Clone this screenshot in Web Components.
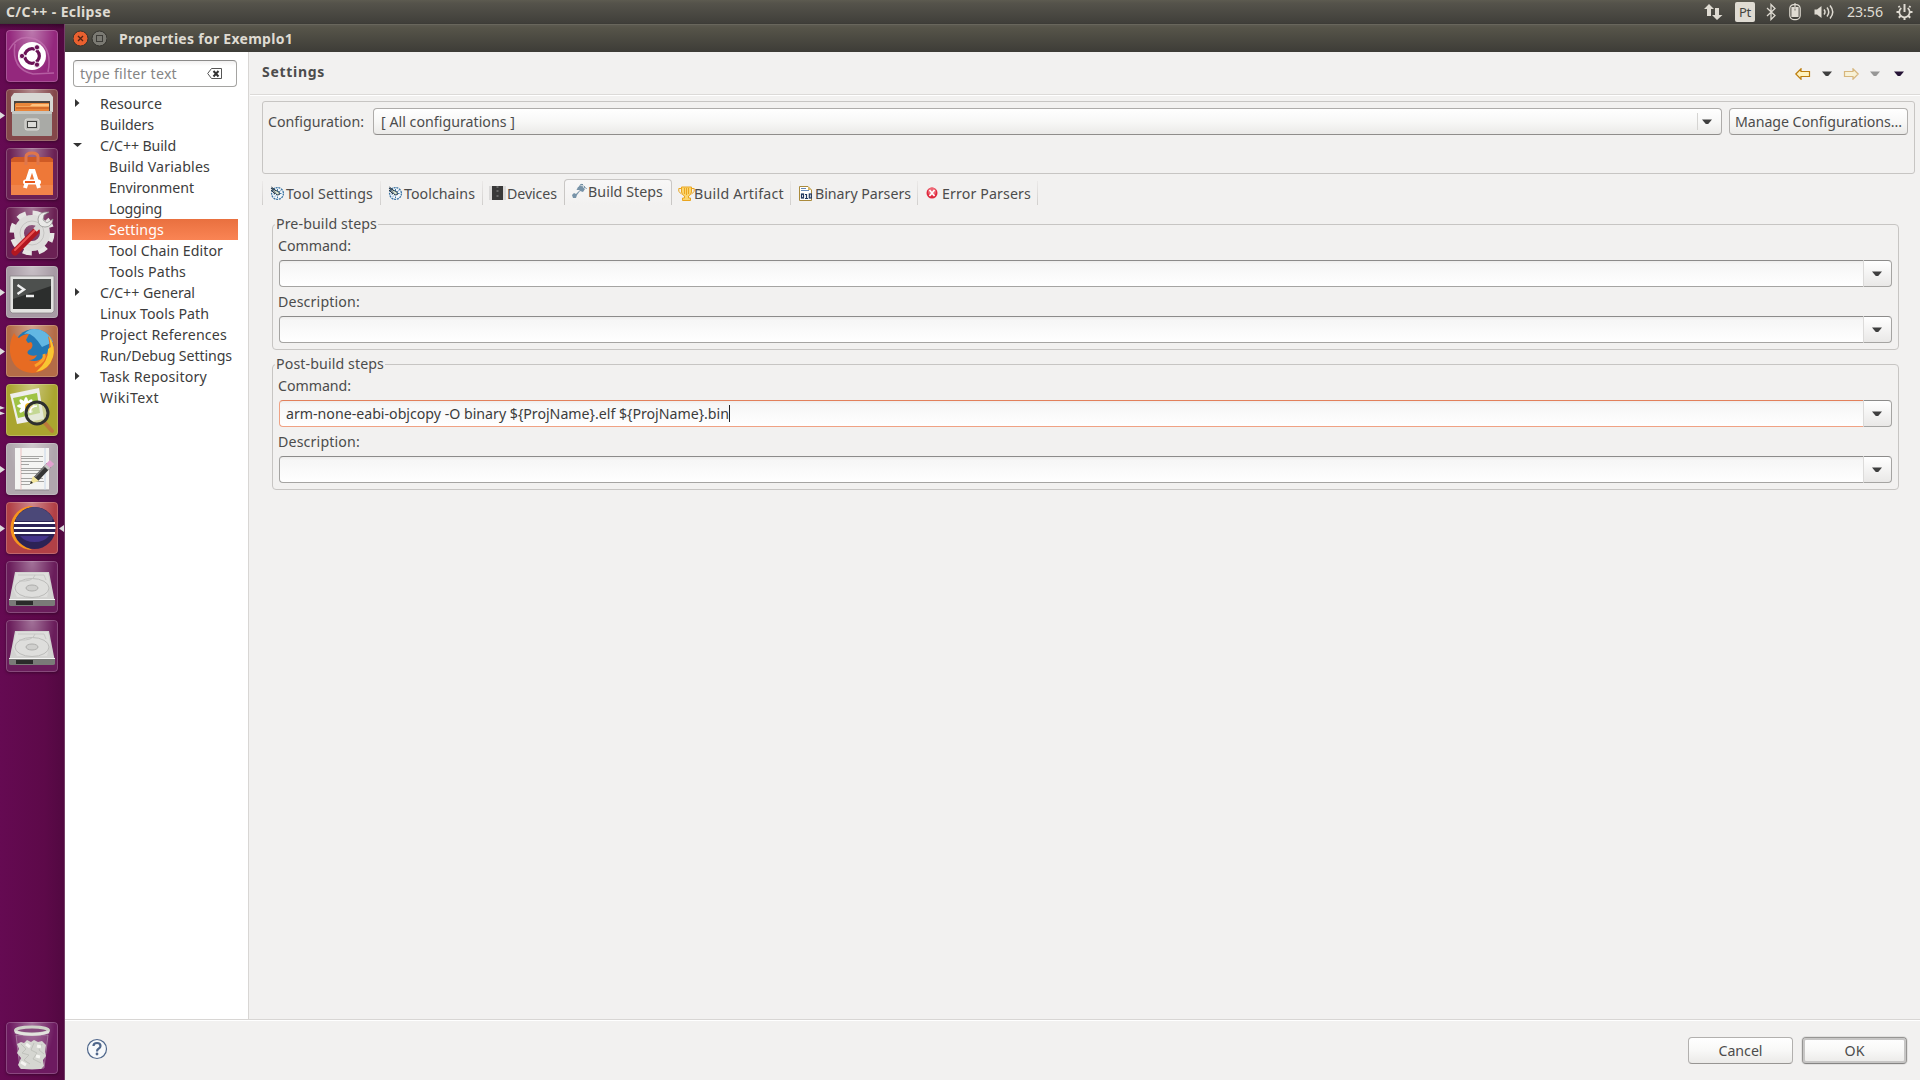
<!DOCTYPE html>
<html lang="en">
<head>
<meta charset="utf-8">
<title>Properties for Exemplo1</title>
<style>
  body {
    margin: 0;
    width: 1920px;
    height: 1080px;
    overflow: hidden;
    background: #f2f1f0;
    color: #4c4c4c;
    font: 14.2px/20px "Noto Sans", "Open Sans", sans-serif;
    display: flex;
    flex-direction: column;
  }
  .desktop { display: flex; height: 1056px; }
</style>
</head>
<body>
<top-panel></top-panel>
<div class="desktop">
  <app-launcher></app-launcher>
  <properties-dialog></properties-dialog>
</div>

<script>
function define(name, html, setup) {
  const template = document.createElement('template');
  template.innerHTML = html;
  customElements.define(name, class extends HTMLElement {
    connectedCallback() {
      if (this.shadowRoot) return;
      this.attachShadow({ mode: 'open' });
      this.shadowRoot.appendChild(template.content.cloneNode(true));
      if (setup) setup(this, this.shadowRoot);
    }
  });
}

/* <fit-text w="95">: one line of text, tracked to a given width */
define('fit-text', `
  <style>
    :host { display: block; flex: none; white-space: nowrap; }
    span { display: inline-block; vertical-align: top; }
  </style>
  <span><slot></slot></span>
`, (host, root) => {
  const w = Number(host.getAttribute('w'));
  host.style.width = w + 'px';
  queueMicrotask(() => {
    const natural = root.querySelector('span').getBoundingClientRect().width;
    if (!natural) return;
    host.style.letterSpacing = (w - natural) / host.textContent.length + 'px';
  });
});

/* small downward triangle used by every drop-down */
define('caret-down', `
  <style>
    :host { display: block; flex: none; width: 10px; height: 6px; color: #3f3f3f; }
    svg { display: block; }
  </style>
  <svg width="10" height="6"><path d="M0 .5H10L6.2 5H3.8Z" fill="currentColor"/></svg>
`);

/* ---------- top panel ---------- */
define('top-panel', `
  <style>
    :host {
      display: flex; align-items: center; box-sizing: border-box;
      height: 24px; padding: 0 7px 0 6px;
      background: linear-gradient(#5d5b50 0, #55534b 3px, #403f3a 23px, #3a3934 24px);
      color: #dfdbd2;
    }
    .title { font-weight: 700; font-size: 14px; margin-right: auto; padding-bottom: 1px; }
    svg { display: block; flex: none; }
    .lang {
      width: 20px; height: 20px; margin: 0 11px 0 12px; border-radius: 2px;
      background: #dfdbd2; color: #45443f; font-size: 13px; line-height: 20px;
      display: flex; justify-content: center;
    }
    .clock { margin: 0 13px 0 12px; padding-bottom: 1px; }
  </style>
  <fit-text class="title" w="105">C/C++ - Eclipse</fit-text>
  <svg width="19" height="18" fill="#dfdbd2"><path d="M5 1 10 6H7V13H3V6H0ZM13 17 8 12H11V5H15V12H18.500Z"/></svg>
  <div class="lang"><fit-text w="12">Pt</fit-text></div>
  <svg width="10" height="18" fill="none" stroke="#dfdbd2" stroke-width="1.300"><path d="M1 5 9 12.500 5 16.500V1.500L9 5.500 1 13"/></svg>
  <svg style="margin-left:13px" width="12" height="18" fill="none" stroke="#dfdbd2" stroke-width="1.200"><rect x=".8" y="1.600" width="10.400" height="15" rx="4"/><path d="M3 4.500H5V8H7V4.500H9V13.500H3Z" fill="#dfdbd2"/><path d="M6 0V6"/></svg>
  <svg style="margin-left:13px" width="21" height="18" fill="none" stroke="#dfdbd2" stroke-width="1.500"><path d="M.5 6.500H3L7.500 3V15L3 11.500H.5Z" fill="#dfdbd2" stroke="none"/><path d="M10 6.500Q12 9 10 11.500M13 4.500Q16.500 9 13 13.500M16 2.500Q21.500 9 16 15.500"/></svg>
  <fit-text class="clock" w="36">23:56</fit-text>
  <svg width="17" height="18" fill="none" stroke="#dfdbd2"><path d="M5.300 5A5.200 5.200 0 1 0 11.700 5" stroke-width="1.700"/><path d="M8.500 1V9" stroke-width="2"/><path d="M3.700 4.300 2.500 3.100M13.300 4.300 14.500 3.100M3.300 9H.5M13.700 9H16.500M4.700 12.800 2.800 14.700M12.300 12.800 14.200 14.700M8.500 14V17" stroke-width="2"/></svg>
`);

/* ---------- launcher ---------- */
const discIcon = `
  <path d="M9 11H43L48.500 39H3.500Z" fill="#d3d3d1"/>
  <path d="M10 12H42L44 24 41 36H11L7 28Z" fill="#dededc"/>
  <path d="M3 39H49V43.500Q49 45 47 45H5Q3 45 3 43.500Z" fill="#7a7b78"/><path d="M10 40H27V44H10Z" fill="#2a2b2a"/>
  <path d="M3 38.500H49" stroke="#f6f6f5"/>
  <ellipse cx="26" cy="27" rx="17" ry="9.500" fill="none" stroke="#bcbcba"/>
  <path d="M12 14H38L40 19" fill="none" stroke="#c8c8c6"/>
  <path d="M13 20Q27 21 29 14" fill="none" stroke="#c4c4c2"/>
  <ellipse cx="26" cy="27" rx="6" ry="3" fill="#cfcfcd" stroke="#adadab"/>`;

const launcherItems = [
  { bg: '#94287d', art: `
    <g fill="none" stroke="#c77ab6" stroke-width="1.500" opacity=".65"><path d="M3 20Q12 3 29 9Q47 17 42 42"/><path d="M9 14Q5 39 27 44L48 43"/></g>
    <circle cx="26" cy="26" r="14" fill="#fff"/>
    <circle cx="26" cy="26" r="7.300" fill="none" stroke="#6a1256" stroke-width="3.300"/>
    <g stroke="#fff" stroke-width="1.300"><path d="M26 26H13M26 26 32 15.500M26 26 32 36.500"/></g><circle cx="26" cy="26" r="5.300" fill="#fff"/>
    <g fill="#6a1256" stroke="#fff" stroke-width=".8"><circle cx="16" cy="26" r="2.600"/><circle cx="31" cy="17.300" r="2.600"/><circle cx="31" cy="34.700" r="2.600"/></g>` },
  { bg: '#84474a', left: 1, art: `
    <path d="M8 4H44L47 8V23H5V8Z" fill="#d8d8d4"/><path d="M8 12H44V22H8Z" fill="#4a4540"/>
    <path d="M10 14H43V22H9V15Z" fill="#e9863a"/><path d="M10 17H24L26 15H43V17.500H10Z" fill="#ffc37e"/><path d="M10 19H43" stroke="#c1571d"/>
    <path d="M6 22H46V46Q46 47 45 47H7Q6 47 6 46Z" fill="#a9aaa6"/><path d="M6 22H46V25H6Z" fill="#c5c6c2"/>
    <rect x="19" y="30" width="14" height="11" rx="2" fill="#bdbdb9" stroke="#deded9"/><rect x="21.500" y="32.500" width="9" height="6" fill="#dcdcd8" stroke="#3f403d"/>` },
  { bg: '#6b2154', art: `
    <path d="M5 11 8 9H44L47 11V15H5Z" fill="#cf5a25"/><path d="M5 14H47V47H5Z" fill="#ee7838"/><path d="M5 37H47V47H5Z" fill="#f1844a"/>
    <path d="M20 17V9Q20 5 26 5T32 9V17" fill="none" stroke="#df764b" stroke-width="3"/>
    <path d="M19 40 24.500 23H27.500L33 40" fill="none" stroke="#fff" stroke-width="4"/><rect x="17" y="31.500" width="18" height="5" rx="2.500" fill="#fff"/><path d="M19 34H29" stroke="#e8581c" stroke-width="2"/>` },
  { bg: '#6b2154', art: `
    <circle cx="26" cy="26" r="19" fill="none" stroke="#e6e5e3" stroke-width="7" stroke-dasharray="8.500 6.420"/>
    <circle cx="26" cy="26" r="13" fill="none" stroke="#dedddb" stroke-width="10"/><circle cx="26" cy="26" r="12" fill="none" stroke="#c6c5c3"/>
    <path d="M9 45 30 24" stroke="#b21720" stroke-width="7" stroke-linecap="round"/><path d="M9 43 29 23" stroke="#ec5453" stroke-width="2" stroke-linecap="round"/>
    <path d="M29 23 35 17" stroke="#d6d6d4" stroke-width="5"/><path d="M43 5Q33 4 32 12Q32 20 39 20Q46 20 47 12L41 16 37 13 38 8Z" fill="#e9e9e7" stroke="#8e8e8c" stroke-width=".7"/>` },
  { bg: '#a79aa4', left: 1, art: `
    <path d="M4 10H48V45L46 47H6L4 45Z" fill="#e2e2e0" stroke="#8b8589" stroke-width=".8"/><rect x="7" y="13" width="38" height="30" fill="#2c2e2d"/><path d="M7 13H45V20L7 33Z" fill="#4d504e"/>
    <path d="M11.500 19 18 23.500 11.500 28M20 30H28" fill="none" stroke="#eee" stroke-width="2.400"/>` },
  { bg: '#b46c47', left: 1, art: `
    <circle cx="28" cy="24" r="20" fill="#2378b5"/><path d="M28 4A20 20 0 0 1 47 17L36 22Q26 6 18 9Q23 4 28 4Z" fill="#62b7e3"/>
    <path d="M8 8Q3 17 4 27Q6 46 26 48Q45 47 48 28Q49 17 42 11Q46 25 38 32Q31 38 23 35Q29 35 31 30Q26 32 22 29Q20 26 25 24Q28 20 25 17L22 18 20 15 23 9Q17 9 13 13Q9 11 8 8Z" fill="#e76b22"/>
    <path d="M43 11Q50 22 47 32Q43 45 30 47Q43 36 42 24L45 22Z" fill="#f8c632"/><path d="M38 29Q40 35 29 41" fill="none" stroke="#f9a22a" stroke-width="3"/>` },
  { bg: '#aaa52f', left: 2, art: `
    <path d="M4 10 33 4 38 35 11 40Z" fill="#eeeeec"/><path d="M7 14 31 9 34 29 12 34Z" fill="#9fc345"/>
    <g fill="#fff"><ellipse cx="20" cy="22" rx="9" ry="2.600"/><ellipse cx="20" cy="22" rx="2.600" ry="9"/><ellipse cx="20" cy="22" rx="9" ry="2.600" transform="rotate(45 20 22)"/><ellipse cx="20" cy="22" rx="9" ry="2.600" transform="rotate(-45 20 22)"/></g><circle cx="23" cy="23" r="4" fill="#f0b521"/>
    <path d="M39 39 46 47" stroke="#bb7a3b" stroke-width="4" stroke-linecap="round"/>
    <circle cx="31" cy="29" r="11" fill="#dde6ca" fill-opacity=".6" stroke="#2e302e" stroke-width="3"/><path d="M24 29Q24 22 31 22" fill="none" stroke="#fff" stroke-width="1.500"/>` },
  { bg: '#b0a7ad', left: 1, art: `
    <path d="M9 5H43V47H9Z" fill="#f4f4f2"/><path d="M9 47H43" stroke="#8f898d"/><path d="M15 5V47" stroke="#e9b4b4" stroke-width=".8"/><path d="M39 5V47" stroke="#bcd0e8" stroke-width=".8"/>
    <path d="M15 13.500H37M15 15.500H33M15 18.500H37M15 21.500H23M15 25.500H37M15 27.500H34M15 30.500H36M15 35.500H37M15 38.500H38M15 41.500H24" stroke="#a5a5a3"/>
    <path d="M30 36 43 22" stroke="#353635" stroke-width="6"/><path d="M29 34 41 21" stroke="#777" stroke-width="1.500"/><path d="M40.500 24.500 46 19" stroke="#e2a0cf" stroke-width="6"/><path d="M40 25 42 23" stroke="#c7c7c5" stroke-width="6"/><path d="M24 41 27 33 33 38Z" fill="#f1e49a"/><path d="M24 41 25 38 27 40Z" fill="#222"/>` },
  { bg: '#b14046', left: 1, right: 1, art: `
    <path d="M27 4A22 22 0 0 0 26 48A25 25 0 0 1 27 4Z" fill="#f7941e"/><path d="M26 4.500A22 22 0 0 0 24 47.500L16 41 13 22Z" fill="#f7941e"/>
    <circle cx="28.500" cy="26" r="21" fill="#2c2255"/><path d="M10 16Q18 5 28.500 5T47 16L46 19H10Z" fill="#4b4878"/><path d="M14 34H43Q38 40 28.500 40T14 34Z" fill="#43338a"/>
    <path d="M8 21H49M8 26H49.500M8 31H49" stroke="#fff" stroke-width="2"/>` },
  { bg: '#6a1d5b', art: discIcon },
  { bg: '#6a1d5b', art: discIcon },
  { bg: '#6d1a60', last: 1, art: `
    <path d="M10 13H42L38 46Q26 49 14 46Z" fill="#fff" fill-opacity=".1" stroke="#b191ac" stroke-width=".7"/>
    <path d="M11 22 15 20 18 21 21 18 25 20 28 18 32 20 36 19 40 23 39 30 40 34 37 38 38 44 35 47H15L12 43 15 36 11 31 13 27Z" fill="#d5d6d1"/>
    <path d="M15 22 20 27 16 31 23 33 18 38 24 42M28 21 25 28 31 31 27 37 35 41M36 22 33 28 38 32" fill="none" stroke="#c0c2bc"/><path d="M20 22 24 25M31 24 35 25M15 40 20 43M30 34 34 35" stroke="#f5f5f2" stroke-width="3"/>
    <ellipse cx="26" cy="8.500" rx="16.500" ry="3.500" fill="#864a7d" stroke="#cfd1c9" stroke-width="3"/><path d="M9 10Q26 15 43 10" fill="none" stroke="#e3e4df" stroke-width="2.500"/>` },
];

define('launcher-tile', `
  <style>
    :host { display: flex; align-items: center; width: 64px; height: 52px; flex: none; }
    .mark { width: 6px; height: 9px; flex: none; display: block; }
    .tile {
      width: 52px; height: 52px; flex: none; border-radius: 4px; overflow: hidden;
      background: radial-gradient(ellipse at 50% 0, rgba(255,255,255,.38), rgba(255,255,255,0) 62%), var(--tile);
      box-shadow: inset 0 0 0 1px rgba(255,255,255,.2), 0 1px 3px rgba(0,0,0,.35);
    }
    .tile svg { display: block; }
  </style>
  <svg class="mark" id="left"></svg>
  <div class="tile"></div>
  <svg class="mark" id="right"></svg>
`);

define('app-launcher', `
  <style>
    :host {
      display: flex; flex-direction: column; gap: 7px; box-sizing: border-box;
      width: 65px; padding: 6px 0 6px; flex: none; border-right: 1px solid #743e68;
      background: linear-gradient(rgba(0,0,0,.35), transparent 6px), linear-gradient(90deg, #650a52, #5d0949 70%, #520841);
    }
    .last { margin-top: auto; }
  </style>
`, (host, root) => {
  for (const item of launcherItems) {
    const tile = document.createElement('launcher-tile');
    tile.style.setProperty('--tile', item.bg);
    if (item.last) tile.className = 'last';
    root.appendChild(tile);
    const part = tile.shadowRoot;
    part.querySelector('.tile').innerHTML = `<svg width="52" height="52" viewBox="0 0 52 52">${item.art}</svg>`;
    if (item.left === 1) part.getElementById('left').innerHTML = '<path d="M0 1 5 4.500 0 8Z" fill="#ddd"/>';
    if (item.left === 2) part.getElementById('left').innerHTML = '<path d="M0 0 5 2 0 3.500ZM0 5.500 5 7.500 0 9Z" fill="#ddd"/>';
    if (item.right) part.getElementById('right').innerHTML = '<path d="M6 1 1 4.500 6 8Z" fill="#ddd"/>';
  }
});

/* ---------- widgets ---------- */
define('push-button', `
  <style>
    :host {
      display: flex; align-items: center; justify-content: center; box-sizing: border-box; flex: none;
      height: 27px; border: 1px solid #b2b0ae; border-bottom-color: #979593; border-radius: 4px;
      background: linear-gradient(#fff, #f8f8f7 50%, #ebeae8);
    }
    :host([default]) {
      border-color: #969593; border-bottom-color: #858483;
      box-shadow: inset 0 0 0 2px #c7c6c5, 0 0 0 1px #e2e1e0;
    }
  </style>
  <slot></slot>
`);

/* editable combo; "focus" gives the entry its orange frame and a caret */
define('combo-entry', `
  <style>
    :host { display: flex; height: 27px; }
    .entry {
      flex: 1; display: flex; align-items: center; box-sizing: border-box; padding-left: 6px;
      border: 1px solid #a5a4a2; border-top-color: #8c8b8a; border-right: 0; border-radius: 4px 0 0 4px;
      background: linear-gradient(#eeedec, #f6f6f6 3px, #fff); color: #3c3c3c;
    }
    .drop {
      width: 29px; box-sizing: border-box; display: flex; align-items: center; padding-left: 8px;
      border: 1px solid #a5a4a2; border-top-color: #8c8b8a; border-left-color: #dcdbda; border-radius: 0 4px 4px 0;
      background: linear-gradient(#fff, #e9e8e7);
    }
    .bar { display: none; width: 1px; height: 17px; background: #222; }
    :host([focus]) .entry { border-color: #f0a284; border-top-color: #e2805b; }
    :host([focus]) .bar { display: block; }
  </style>
  <div class="entry"><slot></slot><span class="bar"></span></div>
  <div class="drop"><caret-down></caret-down></div>
`);

define('group-box', `
  <style>
    :host {
      display: block; box-sizing: border-box; height: 126px; padding: 0 6px;
      border: 1px solid #c7c5c3; border-radius: 4px;
    }
    .legend { width: max-content; height: 20px; margin: -11px 0 0 -4px; padding: 0 1px; background: #f2f1f0; }
    .body { display: flex; flex-direction: column; padding-top: 2px; }
  </style>
  <div class="legend"><slot name="legend"></slot></div>
  <div class="body"><slot></slot></div>
`);

define('build-command', `
  <style>
    :host { display: block; height: 56px; }
    .label { height: 20px; padding-bottom: 4px; margin-left: -1px; }
  </style>
  <div class="label"><slot name="label"></slot></div>
  <combo-entry><slot></slot></combo-entry>
`, (host, root) => {
  if (host.hasAttribute('focus')) root.querySelector('combo-entry').setAttribute('focus', '');
});

/* ---------- tree ---------- */
const tree = [
  ['Resource', 62, 0, 'closed'], ['Builders', 54, 0], ['C/C++ Build', 76, 0, 'open'],
  ['Build Variables', 101, 1], ['Environment', 85, 1], ['Logging', 53, 1], ['Settings', 55, 1, 'selected'],
  ['Tool Chain Editor', 114, 1], ['Tools Paths', 77, 1], ['C/C++ General', 95, 0, 'closed'],
  ['Linux Tools Path', 109, 0], ['Project References', 127, 0], ['Run/Debug Settings', 132, 0],
  ['Task Repository', 107, 0, 'closed'], ['WikiText', 59, 0],
];

define('page-tree', `
  <style>
    :host { display: block; color: #3c3c3c; }
    .row { display: flex; align-items: center; height: 21px; box-sizing: border-box; padding: 1px 0 0 2px; }
    .row svg { width: 26px; height: 10px; flex: none; padding-bottom: 3px; }
    .level1 svg { width: 35px; }
    .selected { color: #fff; background: linear-gradient(#e9703f, #fa8454); }
  </style>
`, (host, root) => {
  for (const [label, w, level, state] of tree) {
    const row = document.createElement('div');
    row.className = `row level${level} ${state || ''}`;
    const arrow = { closed: 'M1 1 5.500 5 1 9Z', open: 'M-1 3H8L3.500 7Z' }[state] || '';
    row.innerHTML = `<svg overflow="visible"><path d="${arrow}" fill="#333"/></svg><fit-text w="${w}">${label}</fit-text>`;
    root.appendChild(row);
  }
});

/* ---------- tabs ---------- */
const gauge = `<circle cx="7.500" cy="7.500" r="5.900" fill="#f3f7fa" stroke="#3a73a3" stroke-width="1.300" stroke-dasharray="2 .8"/>
  <path d="M7.500 3V5M11.500 7.500H9.500M7.500 12V10.500M3.500 8H5M10.500 4.500 8 7.500M5 10.500 6 9.500" stroke="#407bab"/><path d="M1 2 7 9 9.500 8.500 9 6Z" fill="#dce6cf" stroke="#273f56"/><path d="M1.500 1 6 5M1 4 5 8" stroke="#2e3b46"/>`;
const tabs = [
  ['Tool Settings', 87, 118, 7, 15, gauge],
  ['Toolchains', 71, 102, 7, 15, gauge],
  ['Devices', 50, 82, 6, 17, `<path d="M3 0H14V14H3Z" fill="#393939"/><path d="M.5 1H2.500M.5 3H2.500M.5 5H2.500M.5 7H2.500M.5 9H2.500M.5 11H2.500M.5 13H2.500M14.500 1H16.500M14.500 3H16.500M14.500 5H16.500M14.500 7H16.500M14.500 9H16.500M14.500 11H16.500M14.500 13H16.500" stroke="#999" stroke-dasharray="1 .5"/><path d="M7.500 1H9.500M7.500 5H9.500M7.500 10H9.500" stroke="#999"/>`],
  ['Build Steps', 75, 108, 7, 15, `<path d="M0 11 2 9 4 10 8 6 4.500 6 6 3 9 1.500 13 5 11 8 8 7 5 11 4 14H1Z" fill="#7893a8"/><path d="M8 .500 14 4.500M10 0 15 5M7 2.500 10 0" stroke="#68899f" stroke-dasharray="1.500 1"/>`],
  ['Build Artifact', 90, 119, 6, 15, `<path d="M3.500 1H13.500V6Q13 9 10.500 10V12H12.500V14.500H4.500V12H6.500V10Q4 9 3.500 6Z" fill="#fbd56e" stroke="#eaa51f"/><path d="M3 2.500H.8V5.500L3.500 8M14 2.500H16.200V5.500L13.500 8M6.500 2V8M8.500 2V9M10.500 2V8" fill="none" stroke="#eaa51f"/>`],
  ['Binary Parsers', 96, 127, 8, 15, `<path d="M.5.500H9L12.500 4V14.500H.5Z" fill="#fff" stroke="#ab8b3c"/><path d="M9 .500V4H12.500Z" fill="#d9b761"/><path d="M2 2.500H7M2 4.500H10" stroke="#6688b5"/><g fill="none" stroke="#21385f" stroke-width="1.200"><rect x="2.500" y="8" width="2" height="4"/><path d="M6 8.500H7.500V12.500M6 12.500H9"/><rect x="10.300" y="8" width="2" height="4"/></g>`],
  ['Error Parsers', 89, 120, 8, 15, `<circle cx="6" cy="7" r="5.500" fill="#df2a3e"/><circle cx="6" cy="5.500" r="4" fill="#ee6674"/><path d="M3.500 4 8.500 10M8.500 4 3.500 10" stroke="#fff" stroke-width="1.700"/>`],
];

define('tab-strip', `
  <style>
    :host { display: flex; height: 26px; align-items: flex-end; }
    .edge { width: 1px; height: 24px; background: linear-gradient(#eceae9, #d0cecc); }
    .tab {
      display: flex; align-items: center; box-sizing: border-box; height: 24px; padding-top: 1px;
      border-right: 1px solid; border-image: linear-gradient(#eceae9, #d0cecc) 1;
    }
    .tab svg { flex: none; height: 15px; margin: 0 1px 1px 0; overflow: visible; }
    .active {
      height: 26px; padding: 0 0 1px; margin-left: -1px;
      border: 1px solid #c9c7c5; border-bottom: 0; border-image: none; border-radius: 4px 4px 0 0;
      background: linear-gradient(#f8f7f7, #f2f1f0);
    }
  </style>
  <span class="edge"></span>
`, (host, root) => {
  for (const [label, textWidth, width, pad, iconWidth, icon] of tabs) {
    const tab = document.createElement('div');
    tab.className = 'tab' + (label === 'Build Steps' ? ' active' : '');
    tab.style.width = width + 'px';
    tab.style.paddingLeft = pad + 'px';
    tab.innerHTML = `<svg style="width:${iconWidth}px">${icon}</svg><fit-text w="${textWidth}">${label}</fit-text>`;
    root.appendChild(tab);
  }
});

/* ---------- dialog ---------- */
define('window-title', `
  <style>
    :host {
      display: flex; align-items: center; height: 28px; box-sizing: border-box; padding: 0 0 0 8px;
      background: linear-gradient(#5c5a50, #565449 3px, #3d3c37); color: #dfdbd2;
      border-top: 1px solid #68665c; font-weight: 700; font-size: 14px;
    }
    svg { margin: 0 12px 1px 0; }
  </style>
  <svg width="34" height="18"><circle cx="7.500" cy="9.500" r="7.500" fill="#e9602f" stroke="#33322d"/><path d="M5 7 10 12M10 7 5 12" stroke="#522314" stroke-width="1.300"/><circle cx="26.500" cy="9.500" r="7.500" fill="#7b7a73" stroke="#33322d"/><rect x="23.500" y="6.500" width="6" height="6" fill="none" stroke="#3d3c38"/></svg>
  <fit-text w="174">Properties for Exemplo1</fit-text>
`);

define('filter-box', `
  <style>
    :host {
      display: flex; align-items: center; justify-content: space-between; box-sizing: border-box;
      width: 164px; height: 27px; padding: 0 14px 0 6px; margin: 8px 0 6px 8px;
      border: 1px solid #a5a4a2; border-top-color: #8c8b8a; border-radius: 4px;
      background: linear-gradient(#f1f0f0, #fff 5px); color: #858585;
    }
  </style>
  <fit-text w="97">type filter text</fit-text>
  <svg width="15" height="11"><path d="M4.500.500H14.500V10.500H4.500L.7 5.500Z" fill="none" stroke="#555"/><path d="M6.500 3 11.500 8.500M11.500 3 6.500 8.500" stroke="#333" stroke-width="2"/></svg>
`);

define('page-header', `
  <style>
    :host {
      display: flex; align-items: center; justify-content: space-between; box-sizing: border-box;
      height: 44px; padding: 0 16px 0 12px; border-bottom: 1px solid #fff; box-shadow: inset 0 -1px #dcdad8;
    }
    .name { font-weight: 700; font-size: 14px; padding-bottom: 4px; }
    .tools { display: flex; align-items: center; }
    svg { display: block; margin-right: 11px; }
    .dim { opacity: .5; }
    caret-down { margin-right: 11px; }
    caret-down:last-child { margin: 0 0 0 3px; color: #251335; }
  </style>
  <fit-text class="name" w="63">Settings</fit-text>
  <div class="tools">
    <svg width="16" height="12"><path d="M.8 6 6 .8V3.500H14.500V8.500H6V11.200Z" fill="#fff3bf" stroke="#bd7d0d" stroke-width="1.200"/></svg>
    <caret-down></caret-down>
    <svg class="dim" width="16" height="12"><path d="M15.200 6 10 .8V3.500H1.500V8.500H10V11.200Z" fill="#fff3bf" stroke="#bd7d0d" stroke-width="1.200"/></svg>
    <caret-down class="dim"></caret-down>
    <caret-down></caret-down>
  </div>
`);

define('config-bar', `
  <style>
    :host {
      display: flex; gap: 7px; box-sizing: border-box; height: 73px; padding: 6px 6px 0 5px;
      border: 1px solid #c7c5c3; border-radius: 3px;
    }
    .label { line-height: 28px; margin-right: 2px; }
    .select {
      flex: 1; display: flex; align-items: center; box-sizing: border-box; height: 27px; padding: 0 9px 0 7px;
      border: 1px solid #aeacaa; border-bottom-color: #8f8d8b; border-radius: 4px;
      background: linear-gradient(#fff, #f8f8f7 50%, #ebeae8);
    }
    .rule { width: 1px; height: 17px; margin: 0 4px 0 auto; background: #d5d4d2; }
    push-button { width: 179px; }
  </style>
  <fit-text class="label" w="96">Configuration:</fit-text>
  <div class="select"><fit-text w="134">[ All configurations ]</fit-text><span class="rule"></span><caret-down></caret-down></div>
  <push-button><fit-text w="167">Manage Configurations...</fit-text></push-button>
`);

define('properties-dialog', `
  <style>
    :host { flex: 1; display: flex; flex-direction: column; }
    .main { display: flex; height: 967px; }
    .side { width: 183px; background: #fff; border-right: 1px solid #d8d6d4; margin-right: 1px; }
    page-tree { margin: 0 10px 0 7px; }
    .page { flex: 1; }
    .content { padding: 5px 5px 0 12px; }
    tab-strip { margin-top: 5px; }
    .steps { display: flex; flex-direction: column; gap: 14px; padding: 19px 16px 0 10px; }
    .footer {
      flex: 1; display: flex; align-items: center; gap: 9px; padding: 0 13px 0 21px;
      border-top: 1px solid #d8d6d4; box-shadow: inset 0 1px #fff;
    }
    .help { margin: 0 auto 2px 0; }
    .footer push-button { width: 105px; }
    .footer fit-text { padding-top: 1px; }
  </style>
  <window-title></window-title>
  <div class="main">
    <div class="side">
      <filter-box></filter-box>
      <page-tree></page-tree>
    </div>
    <div class="page">
      <page-header></page-header>
      <div class="content">
        <config-bar></config-bar>
        <tab-strip></tab-strip>
        <div class="steps">
          <group-box>
            <fit-text slot="legend" w="101">Pre-build steps</fit-text>
            <build-command><fit-text slot="label" w="73">Command:</fit-text></build-command>
            <build-command><fit-text slot="label" w="82">Description:</fit-text></build-command>
          </group-box>
          <group-box>
            <fit-text slot="legend" w="108">Post-build steps</fit-text>
            <build-command focus><fit-text slot="label" w="73">Command:</fit-text><fit-text w="443">arm-none-eabi-objcopy -O binary \${ProjName}.elf \${ProjName}.bin</fit-text></build-command>
            <build-command><fit-text slot="label" w="82">Description:</fit-text></build-command>
          </group-box>
        </div>
      </div>
    </div>
  </div>
  <div class="footer">
    <svg class="help" width="22" height="22"><circle cx="11" cy="11" r="9.500" fill="#f7f9fb" stroke="#4f678b" stroke-width="1.200"/><path d="M7.500 8Q7.500 5 11 5T14.500 8Q14.500 9.500 12.500 10.700Q11 11.500 11 13.500" fill="none" stroke="#4f678b" stroke-width="2.200"/><circle cx="11" cy="16" r="1.400" fill="#4f678b"/></svg>
    <push-button><fit-text w="44">Cancel</fit-text></push-button>
    <push-button default><fit-text w="20">OK</fit-text></push-button>
  </div>
`);
</script>
</body>
</html>
